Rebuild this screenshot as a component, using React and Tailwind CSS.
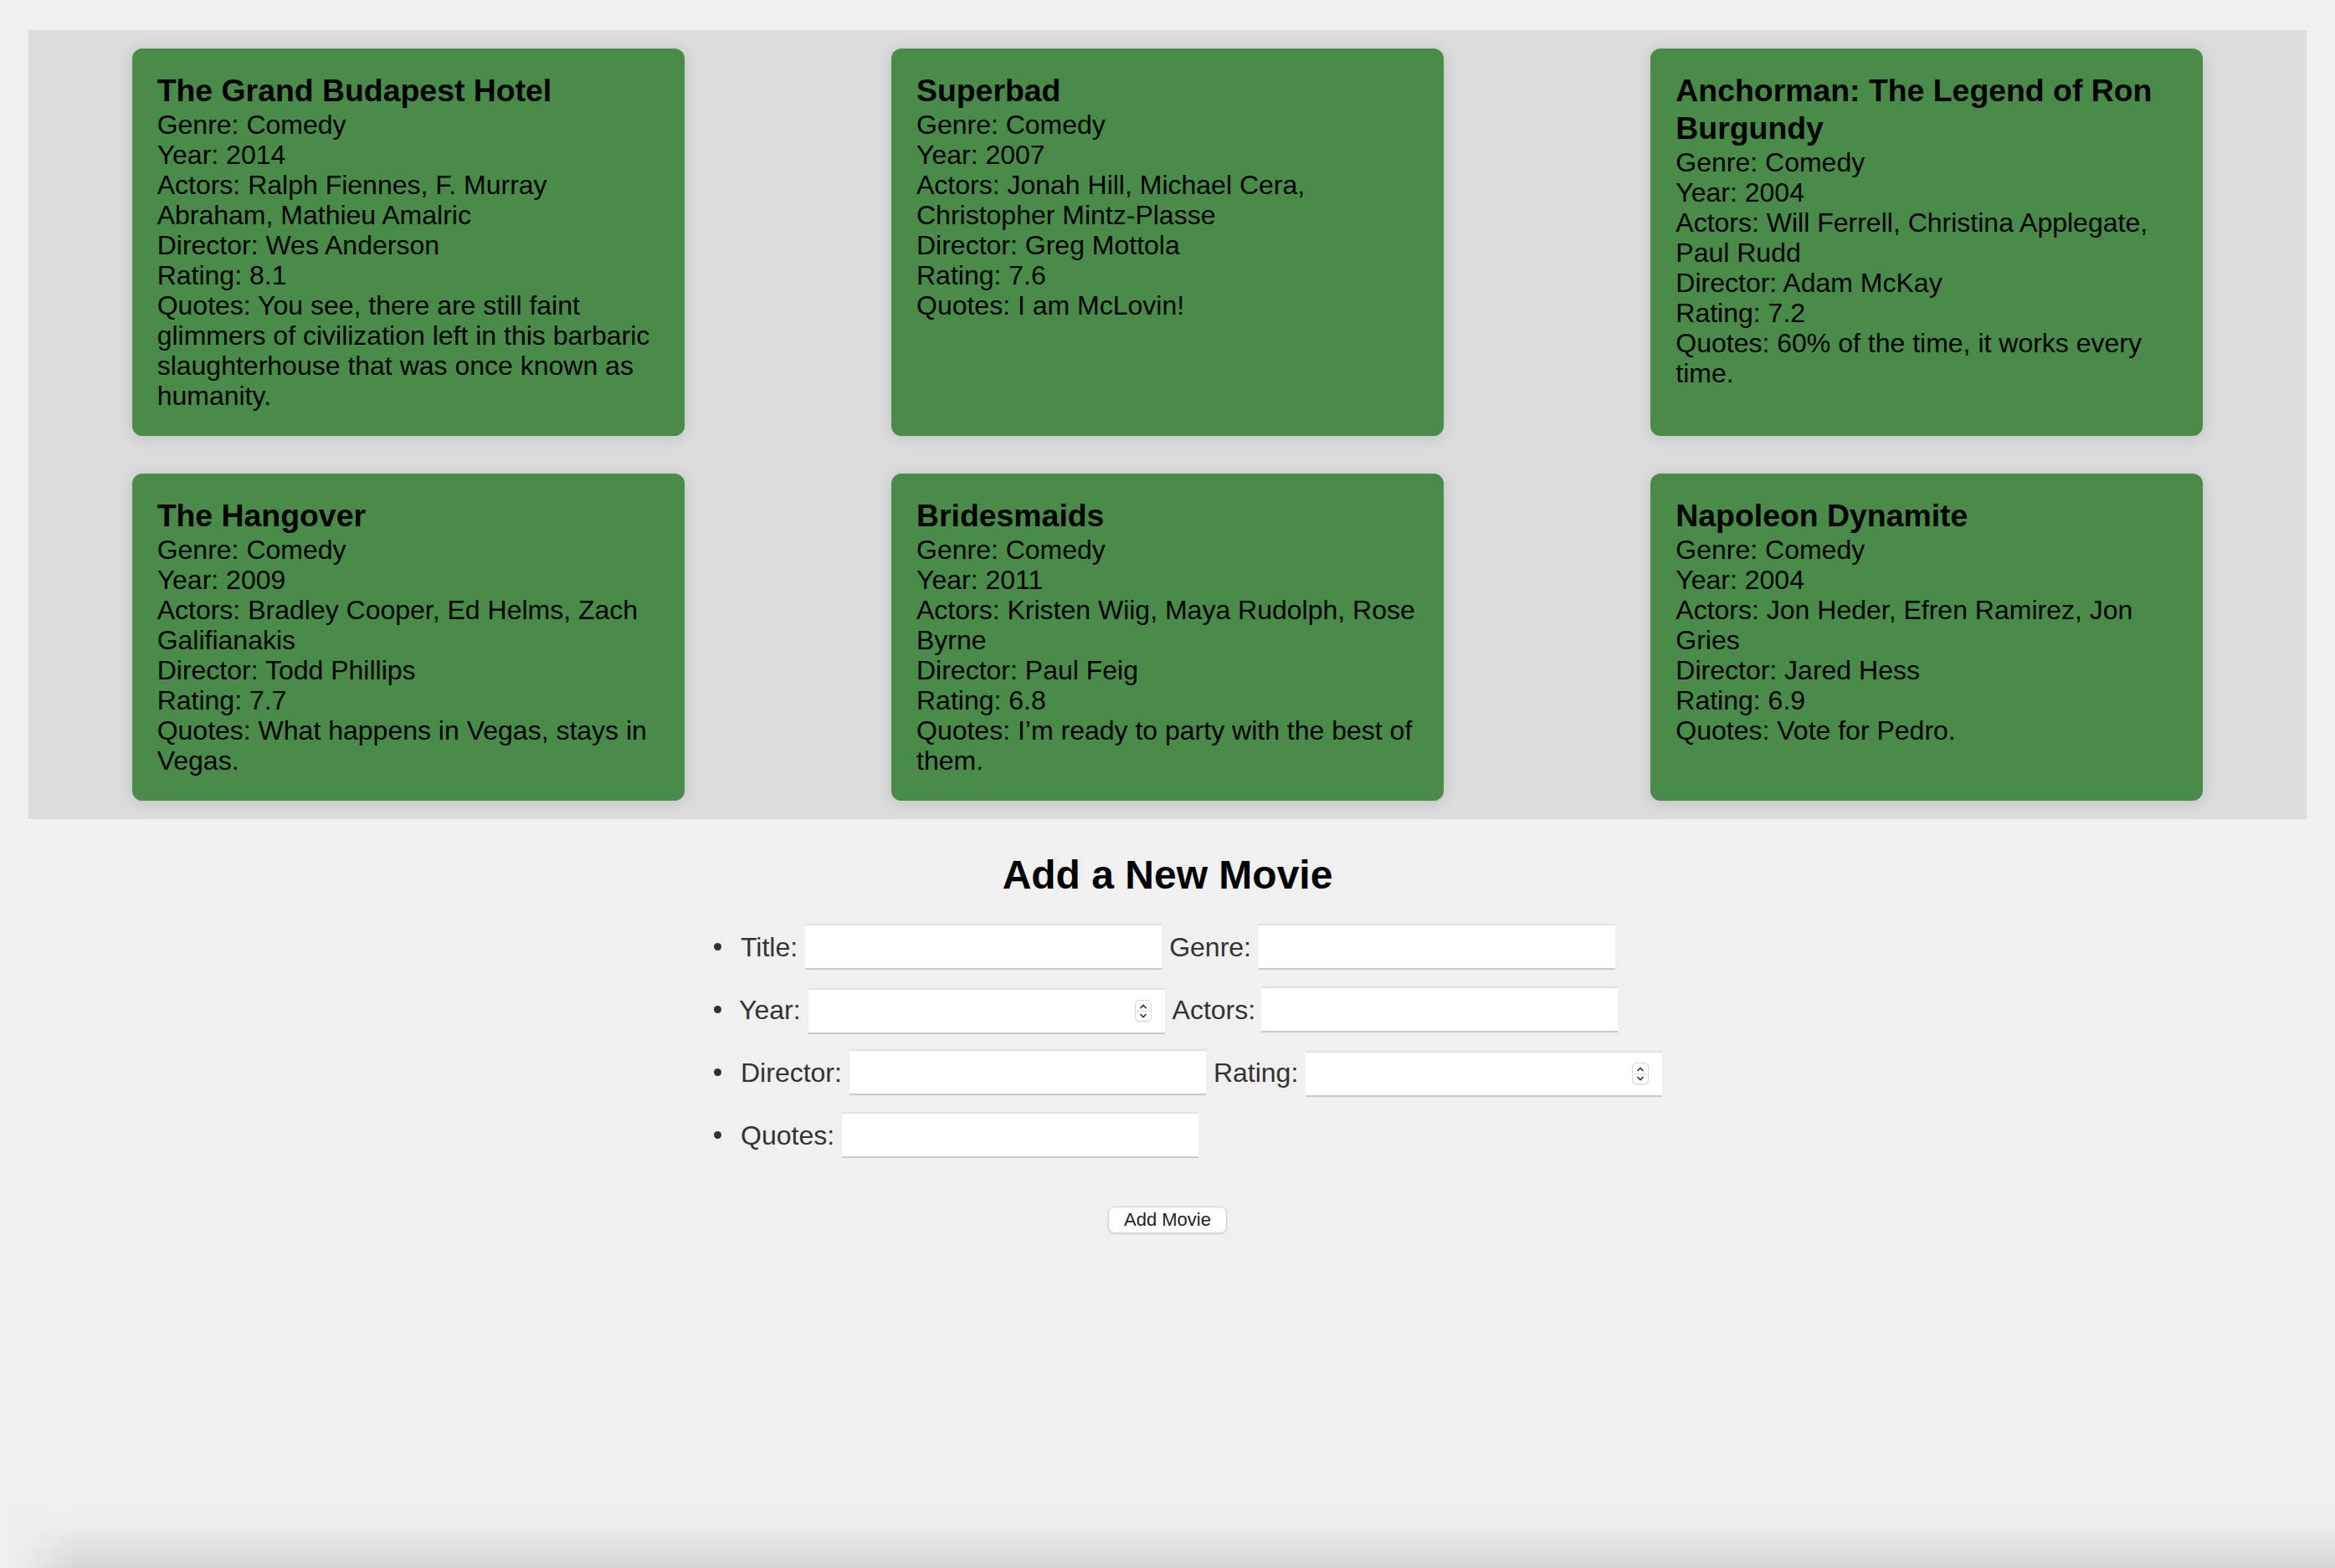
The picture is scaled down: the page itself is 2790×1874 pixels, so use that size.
import { useState } from "react";

const movies = [
  {
    title: "The Grand Budapest Hotel",
    genre: "Comedy",
    year: 2014,
    actors: "Ralph Fiennes, F. Murray Abraham, Mathieu Amalric",
    director: "Wes Anderson",
    rating: 8.1,
    quotes:
      "You see, there are still faint glimmers of civilization left in this barbaric slaughterhouse that was once known as humanity.",
  },
  {
    title: "Superbad",
    genre: "Comedy",
    year: 2007,
    actors: "Jonah Hill, Michael Cera, Christopher Mintz-Plasse",
    director: "Greg Mottola",
    rating: 7.6,
    quotes: "I am McLovin!",
  },
  {
    title: "Anchorman: The Legend of Ron Burgundy",
    genre: "Comedy",
    year: 2004,
    actors: "Will Ferrell, Christina Applegate, Paul Rudd",
    director: "Adam McKay",
    rating: 7.2,
    quotes: "60% of the time, it works every time.",
  },
  {
    title: "The Hangover",
    genre: "Comedy",
    year: 2009,
    actors: "Bradley Cooper, Ed Helms, Zach Galifianakis",
    director: "Todd Phillips",
    rating: 7.7,
    quotes: "What happens in Vegas, stays in Vegas.",
  },
  {
    title: "Bridesmaids",
    genre: "Comedy",
    year: 2011,
    actors: "Kristen Wiig, Maya Rudolph, Rose Byrne",
    director: "Paul Feig",
    rating: 6.8,
    quotes: "I’m ready to party with the best of them.",
  },
  {
    title: "Napoleon Dynamite",
    genre: "Comedy",
    year: 2004,
    actors: "Jon Heder, Efren Ramirez, Jon Gries",
    director: "Jared Hess",
    rating: 6.9,
    quotes: "Vote for Pedro.",
  },
];

const inputClass =
  "w-[426px] h-[55px] bg-white border-x-0 border-t-2 border-b-2 border-t-[#e2e2e2] border-b-[#c9c9c9] outline-none px-[8px] text-[28px]";

const MovieCard = ({ movie }) => (
  <div className="w-[660px] bg-[#498b48] rounded-[12px] px-[30px] pt-[28px] pb-[30px] shadow-[0_2px_18px_rgba(0,0,0,0.13)] text-black text-[32px] leading-[36px]">
    <h3 className="text-[37.4px] leading-[45px] font-bold">{movie.title}</h3>
    <p>Genre: {movie.genre}</p>
    <p>Year: {movie.year}</p>
    <p>Actors: {movie.actors}</p>
    <p>Director: {movie.director}</p>
    <p>Rating: {movie.rating}</p>
    <p>Quotes: {movie.quotes}</p>
  </div>
);

// number input with the little stepper box drawn beside the value
const NumberField = ({ value, onChange }) => (
  <div className="w-[426px] h-[55px] mt-[3px] bg-white border-t-2 border-b-2 border-t-[#e2e2e2] border-b-[#c9c9c9] flex items-center pl-[8px] pr-[16px]">
    <input
      type="text"
      value={value}
      onChange={onChange}
      className="flex-1 min-w-0 h-full outline-none bg-transparent text-[28px]"
    />
    <span className="w-[20px] h-[26px] rounded-[5px] border border-[#d6d6d6] shadow-[0_1px_1px_rgba(0,0,0,0.08)] flex flex-col items-center justify-center bg-white">
      <svg width="10" height="6" viewBox="0 0 10 6" className="mb-[2px]">
        <polyline points="1.5,5 5,1.5 8.5,5" fill="none" stroke="#333" strokeWidth="1.6" />
      </svg>
      <span className="w-full h-px bg-[#dedede]" />
      <svg width="10" height="6" viewBox="0 0 10 6" className="mt-[2px]">
        <polyline points="1.5,1 5,4.5 8.5,1" fill="none" stroke="#333" strokeWidth="1.6" />
      </svg>
    </span>
  </div>
);

const Bullet = () => (
  <span className="w-[9px] h-[9px] rounded-full bg-[#333] mr-[14px] shrink-0" />
);

export default function App() {
  const [form, setForm] = useState({
    title: "",
    genre: "",
    year: "",
    actors: "",
    director: "",
    rating: "",
    quotes: "",
  });

  const set = (key) => (e) => setForm({ ...form, [key]: e.target.value });

  return (
    <div className="min-h-[1874px] h-[1874px] overflow-hidden bg-[#f0f0f0] flex flex-col font-['Liberation_Sans',Arial,sans-serif]">
      {/* MOVIE GRID */}
      <div className="mx-[34px] mt-[36px] bg-[#dcdcdc] grid grid-cols-3 justify-items-center gap-y-[45px] py-[22px]">
        {movies.map((m) => (
          <MovieCard key={m.title} movie={m} />
        ))}
      </div>

      {/* ADD FORM */}
      <h2 className="mt-[39px] text-center text-black text-[48px] leading-[55px] font-bold">
        Add a New Movie
      </h2>

      <ul className="w-[1184px] mx-auto mt-[31px] pl-[50px] text-[32px] text-[#333] flex flex-col gap-[20px]">
        <li className="flex items-center h-[55px] gap-[9px]">
          <Bullet />
          <span>Title:</span>
          <input className={inputClass} value={form.title} onChange={set("title")} />
          <span>Genre:</span>
          <input className={inputClass} value={form.genre} onChange={set("genre")} />
        </li>
        <li className="flex items-center h-[55px] gap-[7px]">
          <Bullet />
          <span className="mr-[2px]">Year:</span>
          <NumberField value={form.year} onChange={set("year")} />
          <span className="ml-[2px]">Actors:</span>
          <input className={inputClass} value={form.actors} onChange={set("actors")} />
        </li>
        <li className="flex items-center h-[55px] gap-[9px]">
          <Bullet />
          <span>Director:</span>
          <input className={inputClass} value={form.director} onChange={set("director")} />
          <span>Rating:</span>
          <NumberField value={form.rating} onChange={set("rating")} />
        </li>
        <li className="flex items-center h-[55px] gap-[9px]">
          <Bullet />
          <span>Quotes:</span>
          <input className={inputClass} value={form.quotes} onChange={set("quotes")} />
        </li>
      </ul>

      <div className="flex justify-center mt-[58px]">
        <button className="w-[142px] h-[32px] rounded-[8px] bg-white border border-[#d2d2d2] shadow-[0_1px_2px_rgba(0,0,0,0.12)] text-[22px] leading-none text-[#222]">
          Add Movie
        </button>
      </div>

      {/* bottom window shadow */}
      <div className="mt-auto h-[80px] shrink-0 bg-[linear-gradient(to_bottom,#f0f0f0_0%,#ededed_35%,#d6d6d6_100%)] [mask-image:linear-gradient(to_right,transparent_10px,black_90px)]" />
    </div>
  );
}
